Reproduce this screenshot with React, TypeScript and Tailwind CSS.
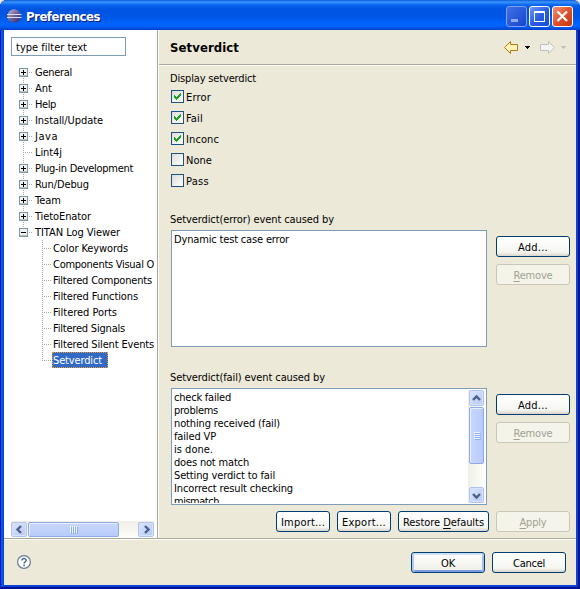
import { useLayoutEffect, useRef, useState, type ReactNode } from "react";

/** A single line of text, tracked so that it fills exactly `w` pixels. */
function Label({ w, children, className = "" }: { w: number; children: ReactNode; className?: string }) {
  const ref = useRef<HTMLSpanElement>(null);
  const [spacing, setSpacing] = useState(0);
  useLayoutEffect(() => {
    const el = ref.current;
    if (!el) return;
    const natural = el.getBoundingClientRect().width;
    const n = (el.textContent ?? "").length;
    if (n) setSpacing((w - natural) / n);
  }, [w]);
  return (
    <span ref={ref} className={`inline-block whitespace-pre ${className}`} style={{ letterSpacing: `${spacing}px` }}>
      {children}
    </span>
  );
}

type Node = { name: string; w: number; leaf?: boolean; open?: boolean };

const nodes: Node[] = [
  { name: "General", w: 37 },
  { name: "Ant", w: 17 },
  { name: "Help", w: 21 },
  { name: "Install/Update", w: 68 },
  { name: "Java", w: 23 },
  { name: "Lint4j", w: 27, leaf: true },
  { name: "Plug-in Development", w: 98 },
  { name: "Run/Debug", w: 54 },
  { name: "Team", w: 26 },
  { name: "TietoEnator", w: 56 },
  { name: "TITAN Log Viewer", w: 85, open: true },
];

const children: Node[] = [
  { name: "Color Keywords", w: 76 },
  { name: "Components Visual O", w: 102 },
  { name: "Filtered Components", w: 100 },
  { name: "Filtered Functions", w: 86 },
  { name: "Filtered Ports", w: 65 },
  { name: "Filtered Signals", w: 73 },
  { name: "Filtered Silent Events", w: 102 },
  { name: "Setverdict", w: 49 },
];

const failEvents: [string, number][] = [
  ["check failed", 56],
  ["problems", 43],
  ["nothing received (fail)", 105],
  ["failed VP", 41],
  ["is done.", 38],
  ["does not match", 74],
  ["Setting verdict to fail", 100],
  ["Incorrect result checking", 118],
  ["mismatch", 44],
];

function TreeRow({ node, first }: { node: Node; first: boolean }) {
  return (
    <div className="flex h-4">
      <svg width="16" height="16" className="shrink-0" shapeRendering="crispEdges">
        {!first && <path d="M4.5 0V4" stroke="#aca899" strokeDasharray="1 1" />}
        {!node.open && <path d="M4.5 8V16" stroke="#aca899" strokeDasharray="1 1" />}
        <path d={node.leaf ? "M4 8.5H13" : "M10 8.5H13"} stroke="#aca899" strokeDasharray="1 1" />
        {node.leaf ? (
          <path d="M4.5 4V9" stroke="#aca899" strokeDasharray="1 1" />
        ) : (
          <>
            <rect x="0.5" y="4.5" width="8" height="8" fill="#f3f1ec" stroke="#7898b5" />
            <path d="M1 11.5H8" stroke="#c6c1b4" />
            <path d={node.open ? "M2 8.5H7" : "M2 8.5H7M4.5 6V11"} stroke="#000" />
          </>
        )}
      </svg>
      <Label w={node.w} className="leading-[18px]">{node.name}</Label>
    </div>
  );
}

function ChildRow({ node, last }: { node: Node; last: boolean }) {
  return (
    <div className="flex h-4 pl-[23px]">
      <svg width="10" height="16" className="shrink-0" shapeRendering="crispEdges">
        <path d={last ? "M0.5 0V9" : "M0.5 0V16"} stroke="#aca899" strokeDasharray="1 1" />
        <path d="M2 8.5H9" stroke="#aca899" strokeDasharray="1 1" />
      </svg>
      {last ? (
        <div className="flex h-4 w-14 border border-dotted border-[#e59a3c] bg-[#316ac5] text-white">
          <Label w={node.w} className="leading-4">{node.name}</Label>
        </div>
      ) : (
        <Label w={node.w} className="pl-px leading-[18px]">{node.name}</Label>
      )}
    </div>
  );
}

function Check({ label, w, on }: { label: string; w: number; on?: boolean }) {
  return (
    <div className="flex h-[21px] items-start">
      <span className="ml-px mr-0.5 h-[13px] w-[13px] border border-[#1c5180] bg-linear-to-br from-[#dcdcd7] to-white">
        {on && (
          <svg width="11" height="11" className="block" shapeRendering="crispEdges" fill="#21a121">
            <path d="M2 4h1v3H2zM3 5h1v3H3zM4 6h1v3H4zM5 5h1v3H5zM6 4h1v3H6zM7 3h1v3H7zM8 2h1v3H8z" />
          </svg>
        )}
      </span>
      <Label w={w} className="leading-[15px]">{label}</Label>
    </div>
  );
}

function Button({ size, children, disabled, primary }: { size: string; children: ReactNode; disabled?: boolean; primary?: boolean }) {
  const look = disabled
    ? "border-[#c9c7ba] bg-[#f5f4ea] text-[#a1a192]"
    : primary
      ? "border-[#003c74] bg-linear-to-b from-white to-[#efeee8] shadow-[inset_0_2px_0_#cee0fc,inset_2px_0_0_#b4caf1,inset_-2px_0_0_#a6bfec,inset_0_-2px_0_#7b9be0]"
      : "border-[#003c74] bg-linear-to-b from-white from-10% via-[#f5f5f1] via-80% to-[#d9d5c9]";
  return (
    <div className={`flex h-[21px] items-center justify-center rounded-[3px] border pt-px ${size} ${look}`}>{children}</div>
  );
}

const U = ({ children }: { children: string }) => (
  <span className="underline decoration-1 underline-offset-[1.5px]">{children}</span>
);

function ScrollButton({ dir, size }: { dir: "left" | "right" | "up" | "down"; size: string }) {
  const d = {
    left: "M9 4L5.5 7.5L9 11",
    right: "M6 4L9.5 7.5L6 11",
    up: "M4 9L7.5 5.5L11 9",
    down: "M4 6L7.5 9.5L11 6",
  }[dir];
  return (
    <div className={`flex shrink-0 items-center justify-center rounded-[2px] border border-[#b0c3ef] bg-linear-to-br from-[#dbe5fd] to-[#b5c8f6] shadow-[inset_0_0_0_1px_#d6e2fe] ${size}`}>
      <svg width="15" height="15" className="shrink-0" fill="none" stroke="#4d6185" strokeWidth="2.4">
        <path d={d} />
      </svg>
    </div>
  );
}

function AddRemove() {
  return (
    <div className="ml-[9px] flex flex-col gap-[7px] pt-1.5">
      <Button size="w-[74px]"><Label w={30}>Add...</Label></Button>
      <Button size="w-[74px]" disabled><Label w={39}><U>R</U>emove</Label></Button>
    </div>
  );
}

function NavArrow({ back }: { back?: boolean }) {
  return (
    <svg width="27" height="14" shapeRendering="crispEdges">
      {back ? (
        <path d="M0.5 6.5L6.5 0.5V3.5H13.5V9.5H6.5V12.5Z" fill="#fff3b8" stroke="#b57a12" shapeRendering="auto" />
      ) : (
        <path d="M14.5 6.5L8.5 0.5V3.5H0.5V9.5H8.5V12.5Z" fill="#f4f4f2" stroke="#c0c0bd" shapeRendering="auto" />
      )}
      <path d="M21 5h5v1h-1v1h-1v1h-1v-1h-1v-1h-1z" fill={back ? "#000" : "#c3c1b6"} />
    </svg>
  );
}

export default function App() {
  return (
    <div className="h-[589px] w-[580px] overflow-hidden bg-[#ece9d8] font-['DejaVu_Sans_Condensed','DejaVu_Sans',sans-serif] text-[11px] leading-[13px] text-black [font-stretch:condensed]">
      <div className="flex h-full flex-col rounded-t-[7px] bg-[#0842d8] shadow-[inset_1px_0_0_#0019b8,inset_-2px_-2px_0_#00138c,inset_3px_0_0_#0855e8]">
        {/* Title bar */}
        <div className="flex h-[30px] shrink-0 items-start rounded-t-[7px] bg-[linear-gradient(#0a5bd8_0,#3c95ff_2px,#0864ef_5px,#0054e1_9px,#0055e5_16px,#0066ff_25px,#005cf5_27px,#0140c5_30px)] pl-[7px] pr-[7px]">
          <svg width="15" height="15" className="mt-[9px]">
            <defs>
              <linearGradient id="orb" x1="0" y1="0" x2="1" y2="1">
                <stop offset="0" stopColor="#c4b9d6" />
                <stop offset=".5" stopColor="#6a629f" />
                <stop offset="1" stopColor="#2a2364" />
              </linearGradient>
            </defs>
            <circle cx="7.2" cy="7" r="6.8" fill="url(#orb)" />
            <path d="M0 5.5H14.5M0 8.5H14.5" stroke="#dcdcf2" strokeWidth="1" />
          </svg>
          <Label w={74} className="ml-1 mt-[9px] text-[13px] font-bold leading-4 text-white [text-shadow:1px_1px_0_#0a1883]">Preferences</Label>
          <div className="ml-auto mt-1.5 flex gap-0.5">
            <div className="h-[21px] w-[21px] rounded-[3px] border border-[#7e9ff0] bg-linear-to-br from-[#4170e5] to-[#1644ce]">
              <svg width="19" height="19" className="block"><rect x="4" y="12" width="7" height="3" fill="#8fa8ef" /></svg>
            </div>
            <div className="h-[21px] w-[21px] rounded-[3px] border border-white bg-linear-to-br from-[#7297f2] via-[#2c5ee3] to-[#144cd8]">
              <svg width="19" height="19" className="block" fill="none" stroke="#fff" shapeRendering="crispEdges"><path d="M4.5 4V14.5H14.5V4M4 5.5H15M4 4.5H15" /></svg>
            </div>
            <div className="h-[21px] w-[21px] rounded-[3px] border border-white bg-linear-to-br from-[#ee9275] via-[#e0502b] to-[#c5350f]">
              <svg width="19" height="19" className="block" stroke="#fff" strokeWidth="2.2"><path d="M4.5 4.5L14 14M14 4.5L4.5 14" /></svg>
            </div>
          </div>
        </div>

        <div className="mx-1 mb-1 flex h-[555px] flex-col bg-[#ece9d8]">
          <div className="flex h-[508px]">
            {/* Category tree */}
            <div className="flex w-[153px] shrink-0 flex-col overflow-hidden bg-white pl-[7px] pt-[7px]">
              <div className="h-[19px] w-[115px] shrink-0 border border-[#7f9db9] pl-1">
                <Label w={71} className="leading-[19px]">type filter text</Label>
              </div>
              <div className="ml-2 mt-2 h-[457px] w-[135px] overflow-hidden">
                {nodes.map((n, i) => <TreeRow key={n.name} node={n} first={i === 0} />)}
                {children.map((n, i) => <ChildRow key={n.name} node={n} last={i === children.length - 1} />)}
              </div>
              <div className="flex h-[17px] w-[143px] shrink-0 items-center bg-linear-to-b from-[#f0efe8] to-[#fefefb]">
                <ScrollButton dir="left" size="h-[15px] w-4" />
                <div className="ml-px flex h-[15px] w-[91px] items-center justify-center gap-px rounded-[2px] border border-[#8eaae8] bg-linear-to-b from-[#c9d7fd] to-[#b8cbf9] shadow-[inset_1px_1px_0_#e8efff]">
                  {[0, 1, 2, 3].map((i) => <span key={i} className="h-[7px] w-px bg-[#eef4fe] shadow-[1px_1px_0_#8cb0f8]" />)}
                </div>
                <ScrollButton dir="right" size="ml-auto h-[15px] w-4" />
              </div>
            </div>
            <div className="w-0.5 shrink-0 border-l border-[#aca899] bg-white" />

            {/* Preference page */}
            <div className="min-w-0 flex-1">
              <div className="flex h-9 border-b border-white pl-[11px] shadow-[inset_0_-1px_0_#aca899]">
                <Label w={69} className="mt-2.5 text-[13px] font-bold leading-4">Setverdict</Label>
                <div className="ml-auto mr-[9px] mt-[11px] flex gap-[9px]">
                  <NavArrow back />
                  <NavArrow />
                </div>
              </div>

              <div className="pl-[11px]">
                <div className="h-6 pt-[6px]"><Label w={86}>Display setverdict</Label></div>
                <Check label="Error" w={25} on />
                <Check label="Fail" w={17} on />
                <Check label="Inconc" w={33} on />
                <Check label="None" w={26} />
                <Check label="Pass" w={23} />

                <div className="mt-[18px] flex h-[17px] items-start"><Label w={164}>Setverdict(error) event caused by</Label></div>
                <div className="flex pl-px">
                  <div className="h-[117px] w-[316px] border border-[#7f9db9] bg-white pl-0.5 pt-[2px]">
                    <Label w={115}>Dynamic test case error</Label>
                  </div>
                  <AddRemove />
                </div>

                <div className="mt-[24px] flex h-[17px] items-start"><Label w={155}>Setverdict(fail) event caused by</Label></div>
                <div className="flex pl-px">
                  <div className="flex h-[117px] w-[316px] justify-between border border-[#7f9db9] bg-white p-px">
                    <div className="flex h-[113px] flex-col items-start overflow-hidden pl-px pt-px">
                      {failEvents.map(([t, w]) => <Label key={t} w={w + 1} className="h-[13px] shrink-0">{t}</Label>)}
                    </div>
                    <div className="flex w-[17px] flex-col items-center bg-linear-to-r from-[#f0efe8] to-[#fefefb]">
                      <ScrollButton dir="up" size="h-4 w-[15px]" />
                      <div className="mt-px flex h-[57px] w-[15px] flex-col items-center justify-center gap-px rounded-[2px] border border-[#8eaae8] bg-linear-to-r from-[#c9d7fd] to-[#b8cbf9] shadow-[inset_1px_1px_0_#e8efff]">
                        {[0, 1, 2, 3].map((i) => <span key={i} className="h-px w-[6px] bg-[#eef4fe] shadow-[1px_1px_0_#8cb0f8]" />)}
                      </div>
                      <ScrollButton dir="down" size="mt-auto h-4 w-[15px]" />
                    </div>
                  </div>
                  <AddRemove />
                </div>

                <div className="mt-1.5 flex justify-end gap-[7px] pr-1.5">
                  <Button size="w-[54px]"><Label w={44}>Import...</Label></Button>
                  <Button size="w-[54px]"><Label w={44}>Export...</Label></Button>
                  <Button size="w-[91px]"><Label w={81}>Restore <U>D</U>efaults</Label></Button>
                  <Button size="w-[74px]" disabled><Label w={27}><U>A</U>pply</Label></Button>
                </div>
              </div>
            </div>
          </div>

          <div className="h-0.5 border-t border-[#aca899] bg-white" />

          {/* Dialog buttons */}
          <div className="flex flex-1 gap-[7px] pl-[13px] pr-2.5 pt-3">
            <svg width="14" height="14" viewBox="0 0 14 14" className="mr-auto mt-[3px]">
              <circle cx="7" cy="7" r="6.4" fill="#fff" stroke="#667b96" strokeWidth="1.2" />
              <path d="M4.9 5.6C4.9 3 9.2 3 9.2 5.3C9.2 6.8 7.1 6.8 7.1 8.6" fill="none" stroke="#4e668a" strokeWidth="1.5" />
              <rect x="6.3" y="9.6" width="1.6" height="1.6" fill="#4e668a" />
            </svg>
            <Button size="w-[74px]" primary><Label w={14}>OK</Label></Button>
            <Button size="w-[74px]"><Label w={32}>Cancel</Label></Button>
          </div>
        </div>
      </div>
    </div>
  );
}
